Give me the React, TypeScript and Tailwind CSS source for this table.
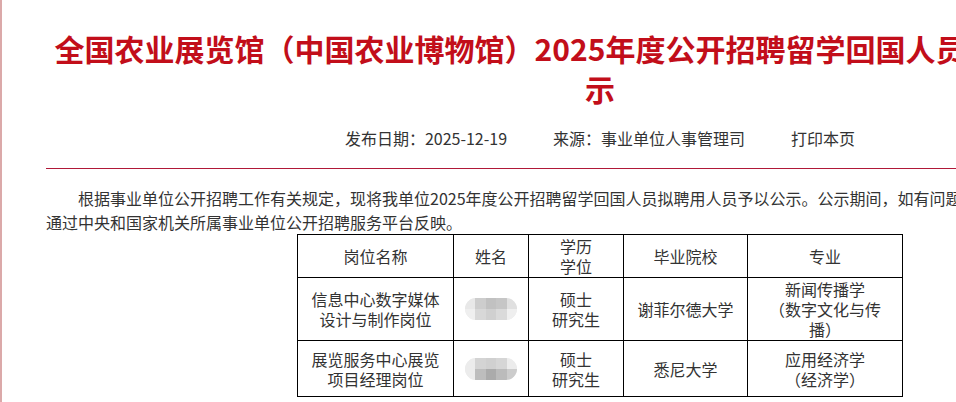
const cjk = { fontFamily: '"Noto Sans CJK SC", "Noto Sans", sans-serif' };

type Row = {
  post: string[];
  school: string;
  degree: string[];
  major: string[];
  height: string;
  pill: "a" | "b";
};

const rows: Row[] = [
  {
    post: ["信息中心数字媒体", "设计与制作岗位"],
    school: "谢菲尔德大学",
    degree: ["硕士", "研究生"],
    major: ["新闻传播学", "（数字文化与传", "播）"],
    height: "h-[63px]",
    pill: "a",
  },
  {
    post: ["展览服务中心展览", "项目经理岗位"],
    school: "悉尼大学",
    degree: ["硕士", "研究生"],
    major: ["应用经济学", "（经济学）"],
    height: "h-[56px]",
    pill: "b",
  },
];

// blurred name, drawn as a mosaic
function NameMosaic({ variant }: { variant: "a" | "b" }) {
  const top = variant === "a"
    ? ["bg-[#e8e8e8]", "bg-[#cdcdcd]", "bg-[#c1c1c1]", "bg-[#c6c6c6]", "bg-[#e0e0e0]"]
    : ["bg-[#ececec]", "bg-[#d4d4d4]", "bg-[#d0d0d0]", "bg-[#d6d6d6]", "bg-[#ececec]"];
  const bottom = variant === "a"
    ? ["bg-[#efefef]", "bg-[#d8d8d8]", "bg-[#d0d0d0]", "bg-[#dadada]", "bg-[#efefef]"]
    : ["bg-[#ececec]", "bg-[#bdbdbd]", "bg-[#ababab]", "bg-[#bbbbbb]", "bg-[#cccccc]"];
  return (
    <div className="mx-auto flex h-[22px] w-[52px] flex-col overflow-hidden rounded-full bg-[#f0f0f0] blur-[0.6px]">
      <div className="flex h-1/2">
        {top.map((c, i) => (
          <div key={i} className={`h-full flex-1 ${c}`} />
        ))}
      </div>
      <div className="flex h-1/2">
        {bottom.map((c, i) => (
          <div key={i} className={`h-full flex-1 ${c}`} />
        ))}
      </div>
    </div>
  );
}

function Lines({ lines }: { lines: string[] }) {
  return (
    <>
      {lines.map((l, i) => (
        <div key={i}>{l}</div>
      ))}
    </>
  );
}

export default function App() {
  return (
    <div className="h-[402px] w-[956px] overflow-hidden border-l-2 border-[#dba9a9] bg-white" style={cjk}>
      <div className="ml-[44px] w-[1108px]">
        {/* title */}
        <h1 className="mt-[28px] text-center text-[30px] font-bold leading-[40px] text-[#c20e1a]">
          全国农业展览馆（中国农业博物馆）2025年度公开招聘留学回国人员拟聘用人员公
          <br />示
        </h1>

        {/* meta */}
        <div className="mt-[18px] flex justify-center gap-[46px] border-b border-[#b01838] pb-[18px] text-[16px] leading-[24px] text-[#333]">
          <span>发布日期：2025-12-19</span>
          <span>来源：事业单位人事管理司</span>
          <span>打印本页</span>
        </div>

        {/* body */}
        <p className="mt-[18px] indent-[32px] text-[16px] leading-[23.5px] text-[#333]">
          根据事业单位公开招聘工作有关规定，现将我单位2025年度公开招聘留学回国人员拟聘用人员予以公示。公示期间，如有问题，请
          <br />
          通过中央和国家机关所属事业单位公开招聘服务平台反映。
        </p>

        <table className="mx-auto border-collapse text-center text-[16px] leading-[20px] text-[#333]">
          <colgroup>
            <col className="w-[156px]" />
            <col className="w-[75px]" />
            <col className="w-[95px]" />
            <col className="w-[124px]" />
            <col className="w-[155px]" />
          </colgroup>
          <tbody>
            <tr className="h-[43px]">
              <td className="border border-black p-0">岗位名称</td>
              <td className="border border-black p-0">姓名</td>
              <td className="border border-black p-0">
                <Lines lines={["学历", "学位"]} />
              </td>
              <td className="border border-black p-0">毕业院校</td>
              <td className="border border-black p-0">专业</td>
            </tr>
            {rows.map((r) => (
              <tr key={r.school} className={r.height}>
                <td className="border border-black p-0">
                  <Lines lines={r.post} />
                </td>
                <td className="border border-black p-0">
                  <NameMosaic variant={r.pill} />
                </td>
                <td className="border border-black p-0">
                  <Lines lines={r.degree} />
                </td>
                <td className="border border-black p-0">{r.school}</td>
                <td className="border border-black p-0">
                  <Lines lines={r.major} />
                </td>
              </tr>
            ))}
          </tbody>
        </table>

        <p className="mt-[3px] indent-[32px] text-[16px] leading-[20px] text-[#333]">
          公示时间：2025年12月19日至12月25日（5个工作日）。
        </p>
      </div>
    </div>
  );
}
